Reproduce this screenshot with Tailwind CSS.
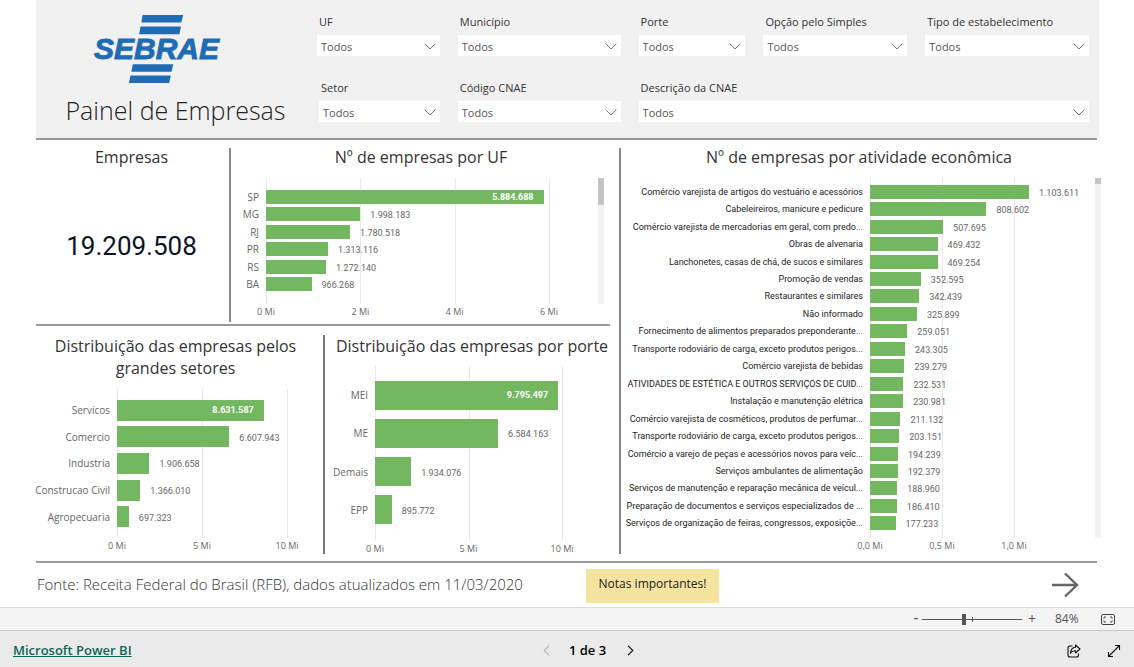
<!DOCTYPE html>
<html lang="pt-BR">
<head>
<meta charset="utf-8">
<title>Painel de Empresas</title>
<script src="https://cdn.jsdelivr.net/npm/@tailwindcss/browser@4"></script>
</head>
<body class="flex min-h-screen flex-col bg-white font-['Open_Sans','Noto_Sans',sans-serif] text-[#333]">

<main class="flex-1 pr-[35px] pl-9">
  <header class="flex bg-[#f1f1f1] pt-[14px] pb-3">
    <div class="flex w-[281px] shrink-0 flex-col items-center pr-[2px]">
      <svg class="mr-9 h-[70px] w-[130px]" viewBox="0 0 130 70" role="img" aria-label="Sebrae" fill="#1f6cb5">
        <path d="M49.6 1h40.6l-2 7.600H48.400zM47.600 12.600h40.400l-1.600 7.600H46zM39.800 50.200h40.400l-1.600 7.600H38.400zM37.400 61.600h40.400l-1.600 7.400H36z"/>
        <text x="1" y="45.400" font-family="Liberation Sans, Arial, sans-serif" font-size="30" font-weight="700" font-style="italic" stroke="#1f6cb5" stroke-width="0.9">SEBRAE</text>
      </svg>
      <h1 class="mt-[10px] text-[25px] leading-8 font-light whitespace-nowrap text-[#222]">Painel de Empresas</h1>
    </div>
    <form id="filters" class="grid flex-1 grid-cols-[123fr_163fr_107fr_144fr_164fr] content-start gap-x-[18px] gap-y-6 pr-[10px]"></form>
  </header>
  <div class="mr-[2px] border-t-2 border-[#999]"></div>

  <div class="mr-[2px] grid grid-cols-[583fr_478fr]">
    <div class="flex flex-col">
      <div class="grid grid-cols-[195fr_380fr] pr-2">
        <section class="mt-2 mb-[2px] flex flex-col items-center border-r-2 border-[#888] pr-[2px]">
          <h2 class="text-base leading-[18px]">Empresas</h2>
          <p class="mt-16 font-[Roboto] text-[26px] leading-8 text-[#0b1426]">19.209.508</p>
        </section>
        <section class="flex flex-col pt-2">
          <h2 class="text-center text-base leading-[18px]">Nº de empresas por UF</h2>
          <div class="mt-3 flex pb-1">
            <div id="uf" class="flex-1"></div>
            <div class="mr-[7px] h-[126px] w-[6px] bg-[#f3f3f3]"><div class="h-[27px] bg-[#c4c4c4]"></div></div>
          </div>
        </section>
      </div>
      <div class="mr-[9px] border-t-2 border-[#999]"></div>
      <div class="grid grid-cols-[289fr_294fr]">
        <section class="mt-[9px] mb-[7px] border-r-2 border-[#777]">
          <h2 class="pr-4 pl-2 text-center text-base leading-[22px]">Distribuição das empresas pelos grandes setores</h2>
          <div id="setores" class="mt-[10px]"></div>
        </section>
        <section class="pt-[11px]">
          <h2 class="text-center text-base leading-[18px]">Distribuição das empresas por porte</h2>
          <div id="porte" class="mt-[11px]"></div>
        </section>
      </div>
    </div>
    <section class="mt-2 mb-[7px] flex flex-col border-l-2 border-[#888]">
      <h2 class="text-center text-base leading-[18px]">Nº de empresas por atividade econômica</h2>
      <div class="mt-3 flex">
        <div id="atividade" class="flex-1"></div>
        <div class="-mr-1 h-[360px] w-[6px] bg-[#f3f3f3]"><div class="h-[6px] bg-[#c4c4c4]"></div></div>
      </div>
    </section>
  </div>

  <div class="mr-[2px] border-t-2 border-[#999]"></div>
  <div class="flex items-center pt-[6px] pb-[3px]">
    <p class="w-[550px] pb-1 pl-px text-[15px] leading-5 font-light">Fonte: Receita Federal do Brasil (RFB), dados atualizados em 11/03/2020</p>
    <button type="button" class="h-[34px] w-[133px] bg-[#f5e3a0] pb-1 text-[12px] text-[#222]">Notas importantes!</button>
    <button type="button" aria-label="Próxima página" class="mr-5 ml-auto pb-[2px]">
      <svg class="h-[26px] w-[28px]" viewBox="0 0 28 26" fill="none" stroke="#666" stroke-width="2.4"><path d="M1 13h25M14 1.5 26 13 14 24.5"/></svg>
    </button>
  </div>
</main>

<div class="flex h-[23px] items-center justify-end border-t border-[#dcdcdc] bg-[#f4f4f4] pr-[19px] text-[#555]">
  <button type="button" class="w-3 pb-1 text-center text-sm leading-5 font-semibold" aria-label="Reduzir">-</button>
  <div class="relative flex h-5 w-[100px] items-center">
    <span class="absolute top-2 left-[50px] h-[5px] w-px bg-[#555]"></span>
    <input type="range" min="0" max="100" value="42" aria-label="Zoom" class="h-5 w-full appearance-none bg-transparent [&::-webkit-slider-runnable-track]:h-px [&::-webkit-slider-runnable-track]:bg-[#555] [&::-webkit-slider-thumb]:-mt-[5px] [&::-webkit-slider-thumb]:h-[11px] [&::-webkit-slider-thumb]:w-1 [&::-webkit-slider-thumb]:appearance-none [&::-webkit-slider-thumb]:bg-[#555]">
  </div>
  <button type="button" class="w-5 pb-px text-center text-sm leading-5" aria-label="Ampliar">+</button>
  <span class="w-12 pl-[13px] text-[12px] leading-5">84%</span>
  <button type="button" aria-label="Ajustar à página" class="ml-[11px]">
    <svg class="h-[11px] w-[14px]" viewBox="0 0 14 11" fill="none" stroke="#444"><rect x=".5" y=".5" width="13" height="10" rx="1.5"/><path d="M3 4.500V3h1.800M9.200 3H11v1.500M11 6.500V8H9.200M4.800 8H3V6.500"/></svg>
  </button>
</div>

<footer class="grid h-[37px] grid-cols-3 items-center border-t border-[#c8c8c8] bg-[#eaeaea] px-[13px] pt-[3px]">
  <a href="#" class="justify-self-start text-[13px] font-semibold text-[#0f6658] underline">Microsoft Power BI</a>
  <nav class="flex items-center justify-center pl-[43px] text-[13px] font-semibold text-black" aria-label="Páginas">
    <button type="button" aria-label="Página anterior" class="mr-[19px]"><svg class="h-[11px] w-[7px]" viewBox="0 0 7 11" fill="none" stroke="#bbb" stroke-width="1.200"><path d="M6 .8 1.200 5.500 6 10.200"/></svg></button>
    <span>1 de 3</span>
    <button type="button" aria-label="Página seguinte" class="ml-[21px]"><svg class="h-[11px] w-[7px]" viewBox="0 0 7 11" fill="none" stroke="#222" stroke-width="1.200"><path d="M1 .8 5.800 5.500 1 10.200"/></svg></button>
  </nav>
  <div class="flex items-center gap-[26px] justify-self-end">
    <button type="button" aria-label="Compartilhar"><svg class="h-[14px] w-[14px]" viewBox="0 0 14 14" fill="none" stroke="#111" stroke-width="1.100"><path d="M5.500 2H3a2 2 0 0 0-2 2v7a2 2 0 0 0 2 2h6.500a2 2 0 0 0 2-2V9.500"/><path d="M8.500 1 13 5 8.500 9V6.800C6 6.700 4.500 7.500 3.500 9.200 3.700 5.800 5.500 3.600 8.500 3.300z" stroke-linejoin="round"/></svg></button>
    <button type="button" aria-label="Tela cheia"><svg class="h-[14px] w-[14px]" viewBox="0 0 14 14" fill="none" stroke="#111" stroke-width="1.100"><path d="M1.500 12.500 12.500 1.500M8 1.500h4.500V6M1.500 8v4.500H6"/></svg></button>
  </div>
</footer>

<script>
const filters = [
  ['UF', 'col-span-1'], ['Município', 'col-span-1'], ['Porte', 'col-span-1'], ['Opção pelo Simples', 'col-span-1'],
  ['Tipo de estabelecimento', 'col-span-1'], ['Setor', 'col-span-1 pl-[2px]'], ['Código CNAE', 'col-span-1'], ['Descrição da CNAE', 'col-span-3'],
];
document.getElementById('filters').innerHTML = filters.map(([name, span], i) => `
  <div class="${span} flex flex-col gap-[6px]">
    <label for="f${i}" class="pl-[2px] text-[11px] leading-[15px] whitespace-nowrap">${name}</label>
    <div class="relative">
      <select id="f${i}" class="block h-[21px] w-full appearance-none bg-white pt-[3px] pl-1 text-[11px] text-[#555]"><option>Todos</option></select>
      <svg class="pointer-events-none absolute top-2 right-1 h-[7px] w-3" viewBox="0 0 12 7" fill="none" stroke="#777"><path d="M.7.7 6 6 11.300.7"/></svg>
    </div>
  </div>`).join('');

// Horizontal bar chart: category column, plot area up to the last tick, trailing space.
function chart(id, o) {
  const fmt = n => n.toLocaleString('de-DE');
  const rows = o.data.map(([name, v], i) => `
    <div class="${o.grid} grid flex-1 items-center">
      <span class="${o.label} flex min-w-0 justify-end pr-[7px] whitespace-nowrap">${name}</span>
      <div class="flex h-full min-w-0 items-center">
        <div class="${o.bar} flex shrink-0 items-center justify-end bg-[#73b761]" style="width:${v / o.max * 100}%">
          ${o.inside && i === 0 ? `<span class="pr-[10px] font-[Roboto] text-[9px] leading-3 font-bold text-white">${fmt(v)}</span>` : ''}
        </div>
        ${o.inside && i === 0 ? '' : `<span class="pt-[2px] pl-[10px] font-[Roboto] text-[9px] leading-3 text-[#666]">${fmt(v)}</span>`}
      </div>
      <span></span>
    </div>`).join('');
  const at = i => i / (o.ticks.length - 1) * 100;
  const lines = o.ticks.map((t, i) => `<span class="absolute inset-y-0 w-px bg-[#eaeaea]" style="left:${at(i)}%"></span>`).join('');
  const ticks = o.ticks.map((t, i) => `<span class="absolute top-0 -translate-x-1/2 whitespace-nowrap" style="left:${at(i)}%">${t}</span>`).join('');
  document.getElementById(id).innerHTML = `
    <div class="relative ${o.height}">
      <div class="${o.grid} absolute inset-0 grid"><span></span><div class="relative">${lines}</div><span></span></div>
      <div class="relative flex h-full flex-col ${o.pad}">${rows}</div>
    </div>
    <div class="${o.grid} grid h-4 text-[9px] leading-4 text-[#666]"><span></span><div class="relative">${ticks}</div><span></span></div>`;
}

chart('uf', {
  grid: 'grid-cols-[35fr_283fr_49fr]', height: 'h-[126px]', pad: 'pt-[10px] pb-[11px]', bar: 'h-[14px]', label: 'text-[10px] leading-3 text-[#666]',
  max: 6e6, inside: true, ticks: ['0 Mi', '2 Mi', '4 Mi', '6 Mi'],
  data: [['SP', 5884688], ['MG', 1998183], ['RJ', 1780518], ['PR', 1313116], ['RS', 1272140], ['BA', 966268]],
});
chart('setores', {
  grid: 'grid-cols-[81fr_170fr_36fr]', height: 'h-[149px]', pad: 'pt-2 pb-2', bar: 'h-[21px]', label: 'text-[10px] leading-3 text-[#666]',
  max: 10e6, inside: true, ticks: ['0 Mi', '5 Mi', '10 Mi'],
  data: [['Servicos', 8631587], ['Comercio', 6607943], ['Industria', 1906658], ['Construcao Civil', 1366010], ['Agropecuaria', 697323]],
});
chart('porte', {
  grid: 'grid-cols-[50fr_187fr_57fr]', height: 'h-[175px]', pad: 'pt-[10px] pb-3', bar: 'h-[29px]', label: 'text-[10px] leading-3 text-[#666]',
  max: 10e6, inside: true, ticks: ['0 Mi', '5 Mi', '10 Mi'],
  data: [['MEI', 9795497], ['ME', 6584163], ['Demais', 1934076], ['EPP', 895772]],
});
chart('atividade', {
  grid: 'grid-cols-[249fr_144fr_81fr]', height: 'h-[360px]', pad: 'pt-[5px] pb-[6px]', bar: 'h-[14px]', label: 'font-[Roboto] text-[9px] leading-3 text-[#222]',
  max: 1e6, inside: false, ticks: ['0,0 Mi', '0,5 Mi', '1,0 Mi'],
  data: [
    ['Comércio varejista de artigos do vestuário e acessórios', 1103611],
    ['Cabeleireiros, manicure e pedicure', 808602],
    ['Comércio varejista de mercadorias em geral, com predo...', 507695],
    ['Obras de alvenaria', 469432],
    ['Lanchonetes, casas de chá, de sucos e similares', 469254],
    ['Promoção de vendas', 352595],
    ['Restaurantes e similares', 342439],
    ['Não informado', 325899],
    ['Fornecimento de alimentos preparados preponderante...', 259051],
    ['Transporte rodoviário de carga, exceto produtos perigos...', 243305],
    ['Comércio varejista de bebidas', 239279],
    ['ATIVIDADES DE ESTÉTICA E OUTROS SERVIÇOS DE CUID...', 232531],
    ['Instalação e manutenção elétrica', 230981],
    ['Comércio varejista de cosméticos, produtos de perfumar...', 211132],
    ['Transporte rodoviário de carga, exceto produtos perigos...', 203151],
    ['Comércio a varejo de peças e acessórios novos para veíc...', 194239],
    ['Serviços ambulantes de alimentação', 192379],
    ['Serviços de manutenção e reparação mecânica de veícul...', 188960],
    ['Preparação de documentos e serviços especializados de ...', 186410],
    ['Serviços de organização de feiras, congressos, exposiçõe...', 177233],
  ],
});
</script>
</body>
</html>
